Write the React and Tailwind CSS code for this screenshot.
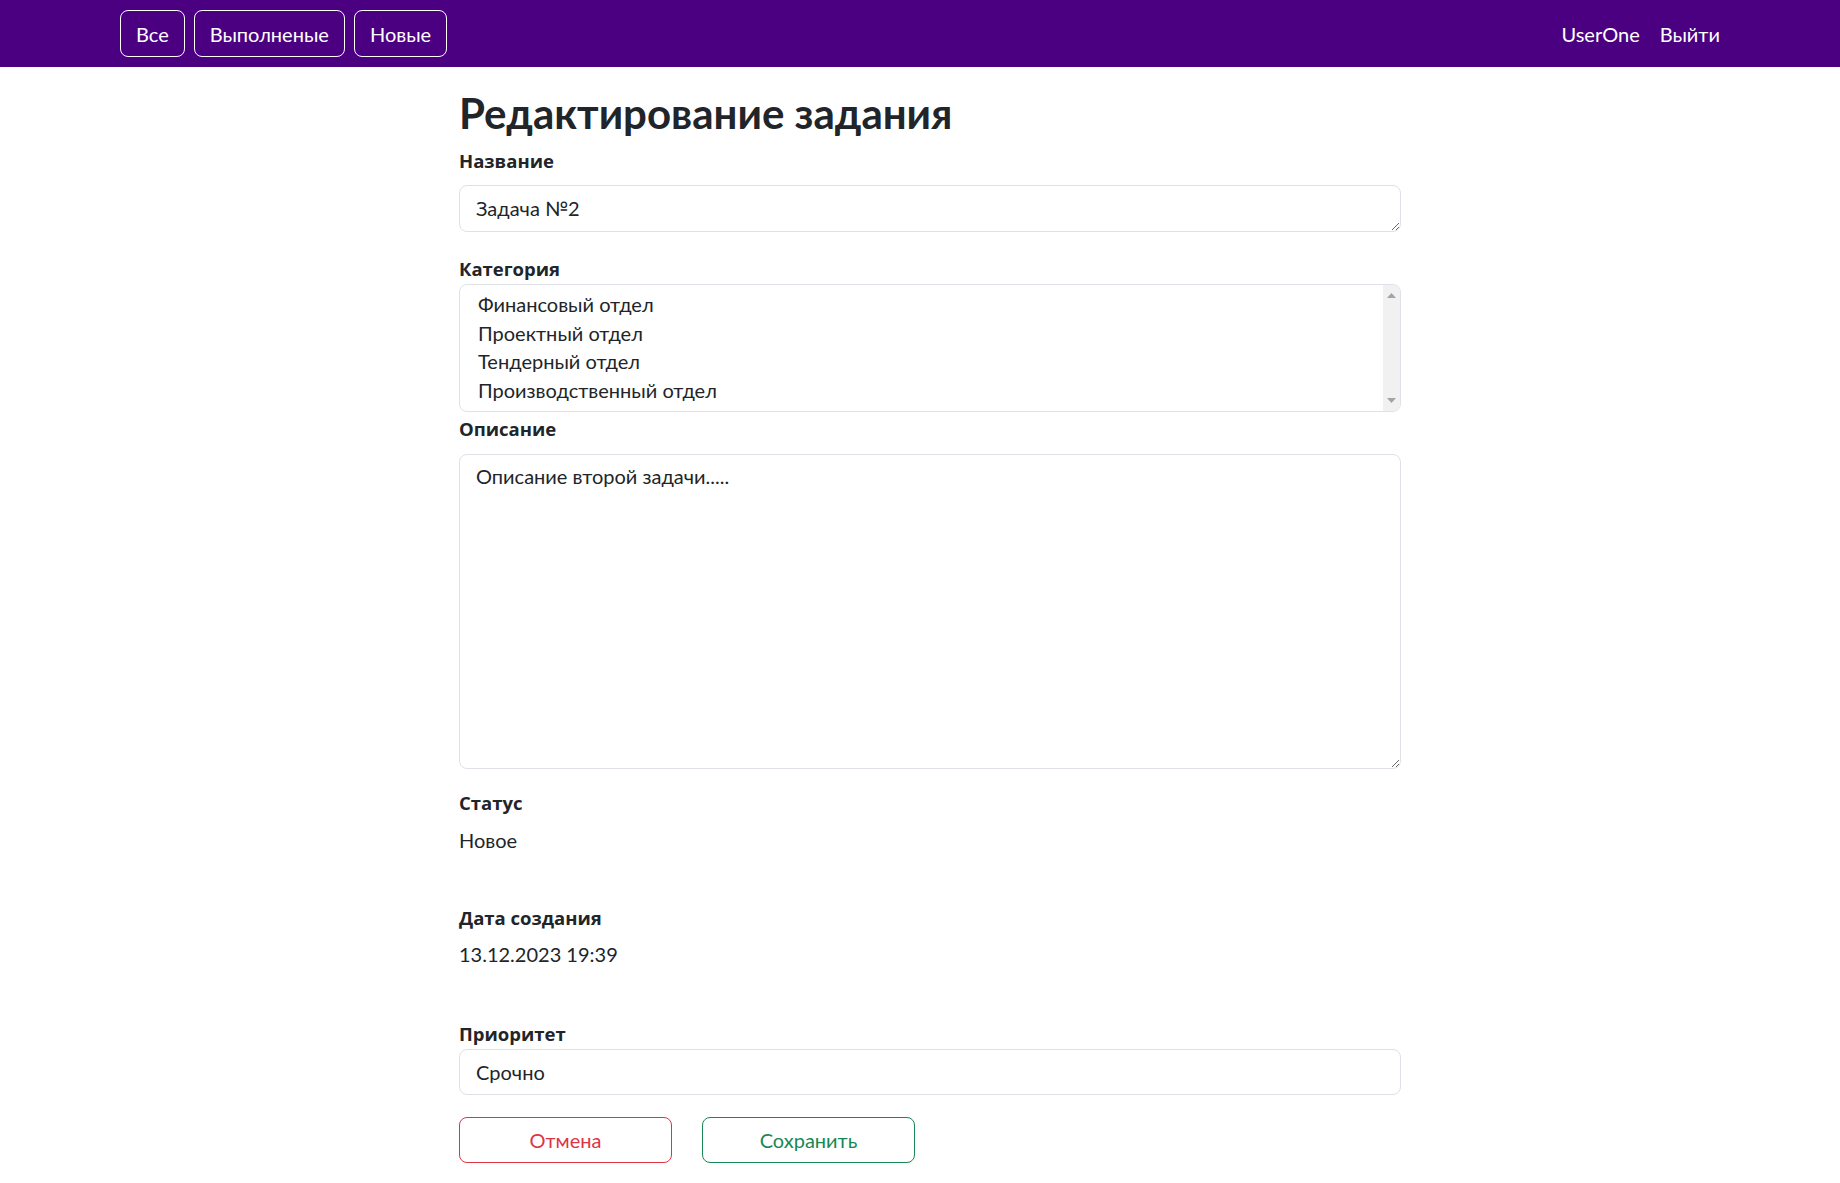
import { useState } from "react";

const font = { fontFamily: 'Lato, "Open Sans", sans-serif' };
const labelFont = { fontFamily: '"Open Sans", Lato, sans-serif' };

function NavButton({ children }) {
	return (
		<button className="h-[47px] px-[15px] border border-white rounded-lg text-[20px] text-white leading-[28px]">
			{children}
		</button>
	);
}

function Label({ children, className = "" }) {
	return (
		<div style={labelFont} className={`text-[18.5px] font-bold leading-[24px] text-[#212529] ${className}`}>
			{children}
		</div>
	);
}

function Value({ children, className = "" }) {
	return (
		<div className={`text-[20px] leading-[28px] text-[#212529] ${className}`}>{children}</div>
	);
}

function App() {
	const [title, setTitle] = useState("Задача №2");
	const [desc, setDesc] = useState("Описание второй задачи.....");
	const categories = ["Финансовый отдел", "Проектный отдел", "Тендерный отдел", "Производственный отдел"];

	return (
		<div className="min-h-screen bg-white" style={font}>
			<nav className="h-[67px] bg-[#4b0082] px-[120px] flex items-center justify-between">
				<div className="flex gap-[9px]">
					<NavButton>Все</NavButton>
					<NavButton>Выполненые</NavButton>
					<NavButton>Новые</NavButton>
				</div>
				<div className="flex gap-5 text-[20px] text-white">
					<a>UserOne</a>
					<a>Выйти</a>
				</div>
			</nav>

			<main className="ml-[459px] w-[942px] flex flex-col">
				<h1 className="mt-[22px] text-[42px] leading-[48px] font-bold text-[#212529]">
					Редактирование задания
				</h1>

				<Label className="mt-[12px]">Название</Label>
				<textarea
					value={title}
					onChange={(e) => setTitle(e.target.value)}
					rows={1}
					className="mt-[12px] h-[47px] min-h-[47px] px-4 py-[8px] border border-[#dee2e6] rounded-lg text-[20px] leading-[29px] text-[#212529] outline-none overflow-hidden resize-y"
				/>

				<Label className="mt-[25px]">Категория</Label>
				<div className="mt-[3px] h-[128px] border border-[#dee2e6] rounded-lg flex overflow-hidden">
					<div className="flex-1 pt-[5px] pl-[18px] text-[20px] text-[#212529]">
						{categories.map((c) => (
							<div key={c} className="h-[28.5px] leading-[28.5px]">{c}</div>
						))}
					</div>
					<div className="w-[17px] bg-[#f1f1f1] flex flex-col justify-between items-center py-[8px]">
						<svg width="9" height="5" viewBox="0 0 9 5"><path d="M0 5 L4.5 0 L9 5 Z" fill="#a3a3a3" /></svg>
						<svg width="9" height="5" viewBox="0 0 9 5"><path d="M0 0 L4.5 5 L9 0 Z" fill="#a3a3a3" /></svg>
					</div>
				</div>

				<Label className="mt-[5px]">Описание</Label>
				<textarea
					value={desc}
					onChange={(e) => setDesc(e.target.value)}
					className="mt-[13px] h-[315px] px-4 pt-[7px] pb-[8px] border border-[#dee2e6] rounded-lg text-[20px] leading-[29px] text-[#212529] outline-none resize-y"
				/>

				<Label className="mt-[22px]">Статус</Label>
				<Value className="mt-[11px]">Новое</Value>

				<Label className="mt-[52px]">Дата создания</Label>
				<Value className="mt-[10px]">13.12.2023 19:39</Value>

				<Label className="mt-[54px]">Приоритет</Label>
				<div className="mt-[3px] h-[46px] px-4 border border-[#dee2e6] rounded-lg flex items-center text-[20px] text-[#212529]">
					Срочно
				</div>

				<div className="mt-[22px] flex gap-[30px]">
					<button className="w-[213px] h-[46px] border border-[#dc3545] rounded-lg text-[20px] text-[#dc3545]">
						Отмена
					</button>
					<button className="w-[213px] h-[46px] border border-[#198754] rounded-lg text-[20px] text-[#198754]">
						Сохранить
					</button>
				</div>
			</main>
		</div>
	);
}

export default App;
